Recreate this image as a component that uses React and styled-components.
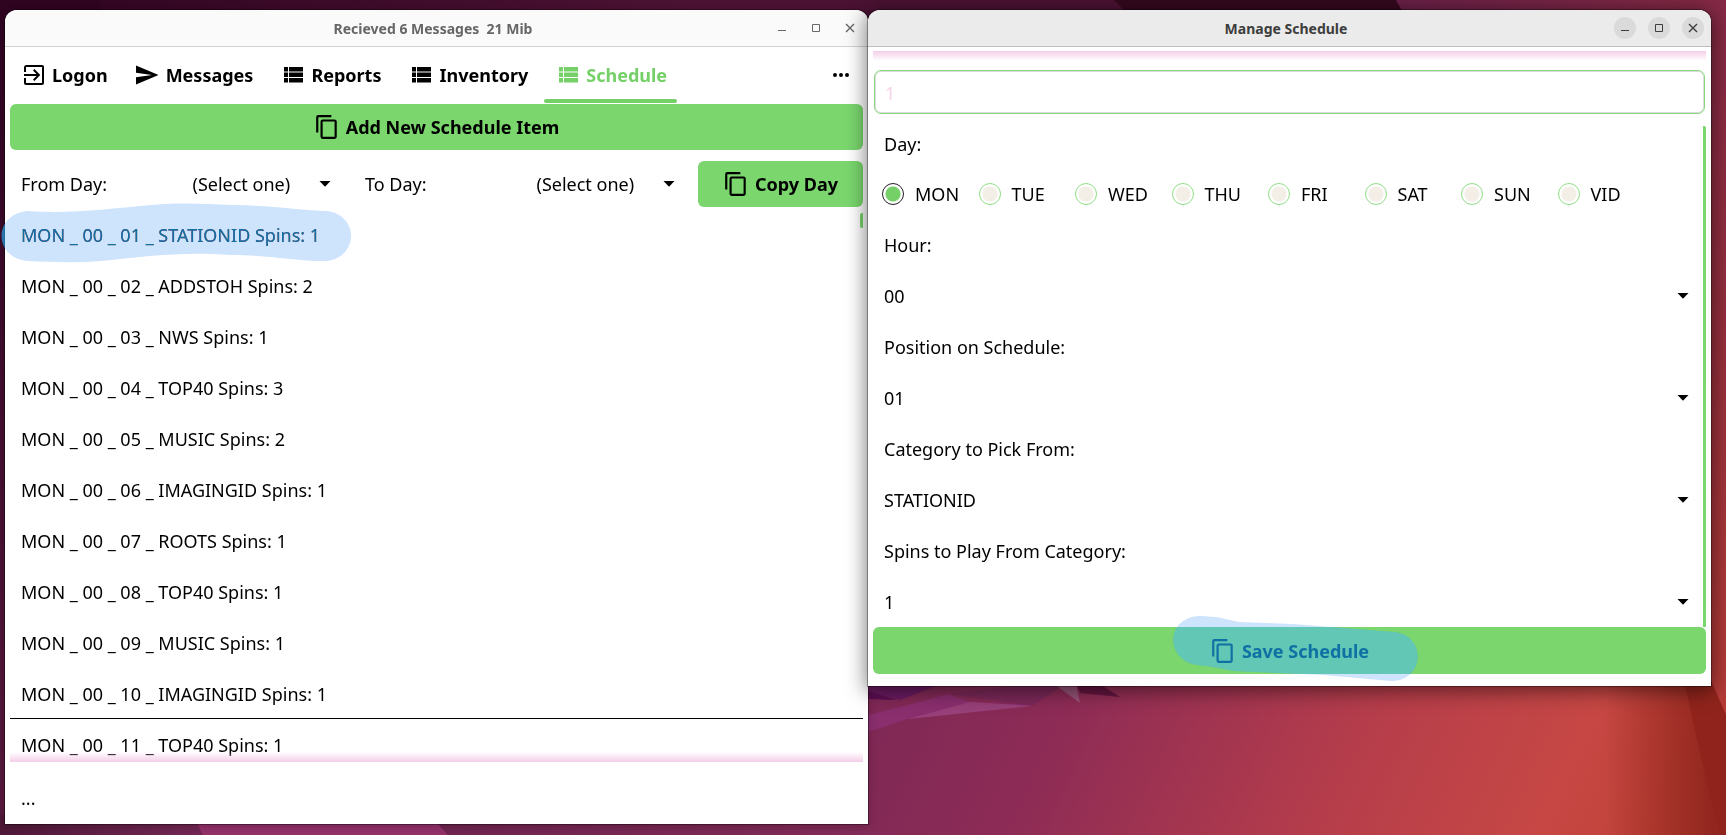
import React from "react";
import styled, { createGlobalStyle, css } from "styled-components";

const green = "#7ad66d";
const sans = '"Noto Sans", sans-serif';

const Global = createGlobalStyle`
  * { box-sizing: border-box; }
  body { margin: 0; font-family: ${sans}; font-size: 18px; line-height: 24px; color: #000; }
  button, input, select { font: inherit; color: inherit; }
`;

const Desktop = styled.div`
  position: relative;
  min-height: 100vh;
  display: flex;
  align-items: flex-start;
  padding: 10px 15px 11px 5px;
  overflow: hidden;
  background: #2c001e;
`;

const Wallpaper = styled.svg`
  position: absolute;
  inset: 0;
  width: 100%;
  height: 100%;
`;

const Window = styled.section`
  position: relative;
  display: flex;
  flex-direction: column;
  flex: ${(p) => p.$grow} 1 0;
  min-width: 0;
  min-height: ${(p) => p.$minHeight};
  background: #fff;
  border-radius: 12px 12px 0 0;
  box-shadow: 0 0 0 1px rgba(0, 0, 0, 0.35), ${(p) => (p.$active ? "0 3px 20px 2px rgba(0, 0, 0, 0.5)" : "0 2px 10px rgba(0, 0, 0, 0.25)")};
`;

const TitleBar = styled.header`
  display: grid;
  grid-template-columns: 112px 1fr 112px;
  align-items: center;
  height: 37px;
  padding-right: 7px;
  border-bottom: 1px solid ${(p) => (p.$active ? "#bdbdbd" : "#d2d2d2")};
  border-radius: 12px 12px 0 0;
  background: ${(p) => (p.$active ? "#ebebeb" : "#fafafa")};
  color: ${(p) => (p.$active ? "#3d3d3d" : "#666")};
`;

const Title = styled.h1`
  grid-column: 2;
  margin: 0;
  padding-top: 2px;
  text-align: center;
  white-space: pre;
  font-size: 14px;
  line-height: 20px;
  font-weight: 700;
`;

const WindowButtons = styled.div`
  display: flex;
  justify-content: flex-end;
  gap: 12px;
`;

const WindowButton = styled.button`
  width: 22px;
  height: 22px;
  padding: 0;
  border: 0;
  border-radius: 50%;
  background: ${(p) => (p.$active ? "#dadada" : "transparent")};
  svg { display: block; }
`;

const Body = styled.div`
  display: flex;
  flex-direction: column;
  flex: 1;
  padding: ${(p) => p.$pad};
`;

const Tabs = styled.nav`
  display: flex;
  align-items: stretch;
  gap: 6px;
  height: 52px;
`;

const Tab = styled.button`
  position: relative;
  display: flex;
  align-items: center;
  gap: 6px;
  padding: 0 10px 6px 12px;
  border: 0;
  background: none;
  color: ${(p) => (p.$current ? "#75d067" : "#000")};
  font-weight: 700;
  ${(p) => p.$current && css`
    &::after {
      content: "";
      position: absolute;
      inset: auto 0 1px;
      height: 4px;
      border-radius: 4px;
      background: #75d067;
    }
  `}
`;

const MoreButton = styled.button`
  margin-left: auto;
  padding: 0 10px 6px;
  border: 0;
  background: none;
  svg { display: block; }
`;

const ActionButton = styled.button`
  position: relative;
  display: flex;
  align-items: center;
  justify-content: center;
  height: ${(p) => (p.$tall ? "47px" : "46px")};
  padding: 0 24px;
  border: 0;
  border-radius: 6px;
  background: ${green};
  color: ${(p) => (p.$marked ? "#0f70a4" : "#000")};
  font-weight: 700;
  white-space: nowrap;
`;

const ButtonContent = styled.span`
  position: relative;
  display: flex;
  align-items: center;
  gap: 6px;
`;

const CopyRow = styled.div`
  display: grid;
  grid-template-columns: 1fr 1fr 165px;
  align-items: center;
  margin-top: 11px;
`;

const CopyField = styled.label`
  display: grid;
  grid-template-columns: 1fr 1fr;
  align-items: center;
  padding-left: 11px;
`;

const SelectBox = styled.span`
  display: grid;
  align-items: center;
  svg { grid-area: 1 / 1; justify-self: end; margin-right: ${(p) => p.$arrow}; pointer-events: none; }
`;

const Select = styled.select`
  grid-area: 1 / 1;
  appearance: none;
  width: 100%;
  height: 30px;
  padding: 0 0 0 ${(p) => p.$indent || "0"};
  border: 0;
  background: none;
`;

const List = styled.ul`
  position: relative;
  display: flex;
  flex-direction: column;
  margin: 1px 0 0;
  padding: 0;
  list-style: none;
`;

const Item = styled.li`
  position: relative;
  height: 51px;
  padding: 14px 11px 0;
  border-top: 1px solid ${(p) => (p.$ruled ? "#000" : "transparent")};
  &:last-of-type { height: 44px; }
`;

const ListFade = styled.div`
  position: absolute;
  inset: auto 0 0;
  height: 10px;
  background: linear-gradient(rgba(244, 206, 232, 0), #f4cee8);
`;

const ListThumb = styled.div`
  position: absolute;
  top: 5px;
  right: 0;
  width: 3px;
  height: 15px;
  border-radius: 2px 0 0 2px;
  background: ${green};
`;

const Status = styled.p`
  margin: 24px 11px 0;
`;

const TopFade = styled.div`
  height: 10px;
  background: linear-gradient(#f4cee8, rgba(244, 206, 232, 0));
`;

const IdInput = styled.input`
  height: 44px;
  margin: 9px 1px 0;
  padding: 2px 10px 0;
  border: 1px solid #86d97a;
  border-radius: 7px;
  outline: 0;
  background: #fff;
  box-shadow: inset 0 0 0 1px #dcdcdc;
  &::placeholder { color: #f6d5ec; opacity: 1; }
`;

const Form = styled.div`
  display: flex;
  flex-direction: column;
  margin-top: 12px;
  border-right: 3px solid ${green};
  border-top-right-radius: 2px;
`;

const Label = styled.label`
  display: flex;
  align-items: center;
  height: 51px;
  padding: 0 11px;
`;

const Field = styled.div`
  display: grid;
  align-items: center;
  height: 51px;
  padding: 0 11px;
`;

const Days = styled.fieldset`
  min-width: 0;
  margin: 0;
  padding: 0;
  border: 0;
`;

const Legend = styled.legend`
  padding: 6px 11px 0;
  height: 43px;
`;

const DayOptions = styled.div`
  display: grid;
  grid-template-columns: repeat(8, 1fr);
  height: 50px;
  padding: 0 49px 0 9px;
`;

const Day = styled.label`
  display: flex;
  align-items: center;
  gap: 11px;
`;

const Radio = styled.input`
  appearance: none;
  width: 22px;
  height: 22px;
  margin: 0;
  border: 1px solid #8fdd84;
  border-radius: 50%;
  background: radial-gradient(circle, #f3eee6 7px, #fff 8px);
  &:checked { border-color: #222; background: radial-gradient(circle, #75d067 7px, #fff 8px); }
`;

const Marker = styled.svg`
  position: absolute;
  left: ${(p) => p.$left};
  top: ${(p) => p.$top};
  pointer-events: none;
  mix-blend-mode: ${(p) => p.$mode};
  fill: ${(p) => (p.$mode === "multiply" ? "#cde4fc" : p.$ink)};
`;

const Icon = ({ d, size = 24 }) => (
  <svg width={size} height={size} viewBox="0 0 24 24" fill="currentColor" aria-hidden="true"><path d={d} /></svg>
);

const paths = {
  login: "M2 9V4.500C2 3 3 2 4.500 2H20c1.400 0 2 .8 2 2v16c0 1.200-.8 2-2 2H4c-1.200 0-2-.8-2-2v-5h2v5h16V4H4v5zM11 7.500l1.400-1.400L18.300 12l-5.900 5.900L11 16.500l3.500-3.500H2v-2h12.500z",
  send: "M0 21.500 22.500 12 0 2.500v7.300L16 12 0 14.200z",
  list: "M3 4h4v4.500H3zm5 0h14v4.500H8zM3 9.500h4V14H3zm5 0h14V14H8zM3 15h4v4.500H3zm5 0h14v4.500H8z",
  copy: "M16 1H4a2 2 0 0 0-2 2v14h2V3h12zm3 4H8a2 2 0 0 0-2 2v14a2 2 0 0 0 2 2h11a2 2 0 0 0 2-2V7a2 2 0 0 0-2-2m0 16H8V7h11z",
  more: "M6 10a2 2 0 1 0 0 4 2 2 0 0 0 0-4m12 0a2 2 0 1 0 0 4 2 2 0 0 0 0-4m-6 0a2 2 0 1 0 0 4 2 2 0 0 0 0-4",
};

const Arrow = () => (
  <svg width="12" height="6" viewBox="0 0 12 6" aria-hidden="true"><path d="M0.500 0h11L6 5.800z" /></svg>
);

const controls = [
  ["Minimize", "M7 13.500h8"],
  ["Maximize", "M7.500 7.500h7v7h-7z"],
  ["Close", "M7 7l8 8M15 7l-8 8"],
];

const Chrome = ({ title, active }) => (
  <TitleBar $active={active}>
    <Title>{title}</Title>
    <WindowButtons>
      {controls.map(([name, d]) => (
        <WindowButton key={name} $active={active} aria-label={name}>
          <svg width="22" height="22" fill="none" stroke="currentColor" strokeWidth={name === "Close" ? 1.4 : 1}><path d={d} /></svg>
        </WindowButton>
      ))}
    </WindowButtons>
  </TitleBar>
);

const Highlight = ({ width, height, d, left, top, ink }) =>
  ["multiply", "lighten"].map((mode) => (
    <Marker key={mode} $mode={mode} $ink={ink} $left={left} $top={top} width={width} height={height} aria-hidden="true"><path d={d} /></Marker>
  ));

const CopyContent = ({ children }) => (
  <ButtonContent><Icon d={paths.copy} size={26} />{children}</ButtonContent>
);

const tabs = [["Logon", "login"], ["Messages", "send"], ["Reports", "list"], ["Inventory", "list"], ["Schedule", "list"]];
const items = ["STATIONID Spins: 1", "ADDSTOH Spins: 2", "NWS Spins: 1", "TOP40 Spins: 3", "MUSIC Spins: 2", "IMAGINGID Spins: 1", "ROOTS Spins: 1", "TOP40 Spins: 1", "MUSIC Spins: 1", "IMAGINGID Spins: 1", "TOP40 Spins: 1"];
const days = ["MON", "TUE", "WED", "THU", "FRI", "SAT", "SUN", "VID"];
const fields = [["Hour:", "00"], ["Position on Schedule:", "01"], ["Category to Pick From:", "STATIONID"], ["Spins to Play From Category:", "1"]];

export default function App() {
  return (
    <Desktop>
      <Global />
      <Wallpaper viewBox="0 0 1726 835" preserveAspectRatio="none" aria-hidden="true">
        <defs>
          <linearGradient id="base" gradientUnits="userSpaceOnUse" x1="900" y1="560" x2="1640" y2="900">
            <stop offset="0" stopColor="#7d2856" /><stop offset=".25" stopColor="#8c2b56" /><stop offset=".6" stopColor="#b53d4b" /><stop offset=".85" stopColor="#c64744" /><stop offset="1" stopColor="#c04236" />
          </linearGradient>
          <linearGradient id="top"><stop offset="0" stopColor="#2e0420" /><stop offset=".4" stopColor="#4b1233" /><stop offset=".65" stopColor="#4d1234" /></linearGradient>
          <linearGradient id="left" x2="0" y2="1"><stop offset="0" stopColor="#2e0420" /><stop offset="1" stopColor="#5b1a40" /></linearGradient>
          <linearGradient id="topRight"><stop offset="0" stopColor="#6a2048" /><stop offset="1" stopColor="#872a44" /></linearGradient>
          <linearGradient id="right" x2="0" y2="1"><stop offset="0" stopColor="#852946" /><stop offset=".5" stopColor="#98303d" /><stop offset="1" stopColor="#b73c37" /></linearGradient>
          <linearGradient id="edge"><stop offset="0" stopColor="#8f251d" stopOpacity="0" /><stop offset="1" stopColor="#8f251d" /></linearGradient>
          <linearGradient id="stripA"><stop offset="0" stopColor="#4f1838" /><stop offset="1" stopColor="#742654" /></linearGradient>
          <linearGradient id="stripB"><stop offset="0" stopColor="#6f2450" /><stop offset="1" stopColor="#832a57" /></linearGradient>
        </defs>
        <path fill="url(#base)" d="M0 0h1726v835H0z" />
        <path fill="url(#top)" d="M0 0h1726v100H0z" />
        <path fill="url(#left)" d="M0 0h100v835H0z" />
        <path fill="#35091e" d="M1114 0h300v60h-240z" />
        <path fill="url(#topRight)" d="M1396 0h330v60h-296z" />
        <path fill="url(#edge)" d="M1605 680h80l33 155H1605z" />
        <path fill="#90241c" d="M1684 680h42v155h-8z" />
        <path fill="url(#right)" d="M1700 0h26v715l-15-35h-11z" />
        <path fill="url(#stripA)" d="M0 815h193l10 20H0z" />
        <path fill="#93306a" d="M193 815h237l18 20H203z" />
        <path fill="url(#stripB)" d="M430 815h440v20H448z" />
        <path fill="#7a2858" d="M948 694l114-14h10l-40 26z" />
        <path fill="#8a2e6e" d="M868 715l40-10 40-11 22 8 62 3-124 14-40 13z" />
        <path fill="#984079" d="M908 719l62-17 62 4z" />
        <path fill="#6a1a60" d="M868 680h84l-52 20-32-8z" />
        <path fill="#5c0e52" d="M868 691l29 9-29-1z" />
        <path fill="#64153f" d="M1076 684h24l20 13-40-4z" />
        <path fill="#965378" d="M1054 684h22l4 19z" />
      </Wallpaper>

      <Window $grow={863} $minHeight="calc(100vh - 21px)">
        <Chrome title="Recieved 6 Messages  21 Mib" />
        <Body $pad="5px 5px 8px">
          <Tabs>
            {tabs.map(([name, icon]) => (
              <Tab key={name} $current={name === "Schedule"}><Icon d={paths[icon]} />{name}</Tab>
            ))}
            <MoreButton aria-label="More"><Icon d={paths.more} /></MoreButton>
          </Tabs>
          <ActionButton><CopyContent>Add New Schedule Item</CopyContent></ActionButton>
          <CopyRow>
            {["From Day:", "To Day:"].map((name) => (
              <CopyField key={name}>
                {name}
                <SelectBox $arrow="23px"><Select $indent="5px"><option>(Select one)</option></Select><Arrow /></SelectBox>
              </CopyField>
            ))}
            <ActionButton><CopyContent>Copy Day</CopyContent></ActionButton>
          </CopyRow>
          <List>
            {items.map((text, i) => (
              <Item key={i} $ruled={i === 10}>
                MON _ 00 _ {String(i + 1).padStart(2, "0")} _ {text}
                {i === 0 && (
                  <Highlight ink="#0f70a4" left="-9px" top="-7px" width={351} height={62} d="M26 9C70 12 105 7 150 3 185 0 205 2 230 3 265 3 300 8 326 9 358 13 358 55 326 59 300 60 270 53 230 53 180 49 140 55 100 59 75 61 50 60 26 59-8 55-8 13 26 9z" />
                )}
              </Item>
            ))}
            <ListFade />
            <ListThumb />
          </List>
          <Status>...</Status>
        </Body>
      </Window>

      <Window $grow={843} $minHeight="0" $active>
        <Chrome title="Manage Schedule" active />
        <Body $pad="4px 5px 12px">
          <TopFade />
          <IdInput placeholder="1" aria-label="Schedule id" />
          <Form>
            <Days>
              <Legend>Day:</Legend>
              <DayOptions>
                {days.map((day) => (
                  <Day key={day}><Radio type="radio" name="day" defaultChecked={day === "MON"} />{day}</Day>
                ))}
              </DayOptions>
            </Days>
            {fields.map(([name, value], i) => (
              <React.Fragment key={name}>
                <Label htmlFor={`field${i}`}>{name}</Label>
                <Field><SelectBox $arrow="3px"><Select id={`field${i}`}><option>{value}</option></Select><Arrow /></SelectBox></Field>
              </React.Fragment>
            ))}
          </Form>
          <ActionButton $tall $marked>
            <Highlight ink="#00c7b4" left="300px" top="-12px" width={246} height={66} d="M26 1C45 1 55 5 67 7L120 9 222 17C254 21 252 66 218 66L150 60 60 56C45 53 35 51 24 50-8 45-8 3 26 1z" />
            <CopyContent>Save Schedule</CopyContent>
          </ActionButton>
        </Body>
      </Window>
    </Desktop>
  );
}
